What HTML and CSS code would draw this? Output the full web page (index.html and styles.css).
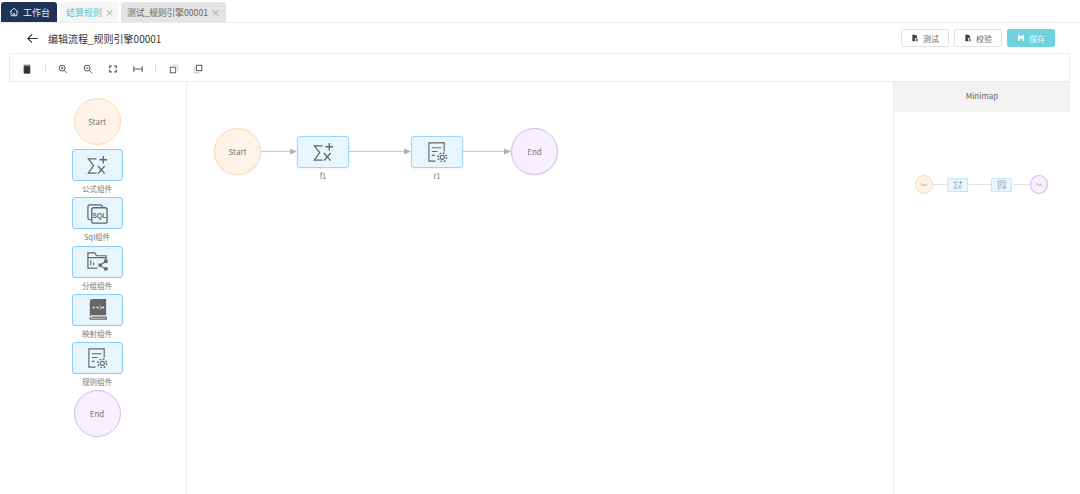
FILE: index.html
```html
<!DOCTYPE html>
<html lang="zh-CN">
<head>
    <meta charset="UTF-8">
    <title>编辑流程_规则引擎00001</title>
    <link rel="stylesheet" href="styles.css">
</head>
<body>
    <svg class="defs" width="0" height="0">
        <symbol id="i-formula" viewBox="0 0 24 24">
            <path d="M11 5H2.500L8 12 2.500 20H11" fill="none" stroke="currentColor" stroke-width="1.300"/>
            <path d="M12.500 12.500l7 8M19.500 12.500l-7 8M18 2v8M14 6h8" fill="none" stroke="currentColor" stroke-width="1.400"/>
        </symbol>
        <symbol id="i-group" viewBox="0 0 24 24">
            <path d="M12 19H2V3h7l2 3h10v5M2 8h19" fill="none" stroke="currentColor" stroke-width="1.300"/>
            <path d="M15 16l5-4M15 16l5 4" fill="none" stroke="currentColor" stroke-width="1.200"/>
            <path d="M13 14h3.500v3.500H13zM19 10h3.500v3.500H19zM19 18h3.500v3.500H19z" fill="currentColor"/>
            <path d="M5 11v5M8 13v3" fill="none" stroke="currentColor" stroke-width="1.200"/>
        </symbol>
        <symbol id="i-map" viewBox="0 0 24 24">
            <path d="M6 1h15v17H6a2 2 0 0 0-2 2V4a3 3 0 0 1 2-3z" fill="currentColor"/>
            <path d="M4 20a2 2 0 0 0 2 2h15v-2H6" fill="none" stroke="currentColor" stroke-width="1.300"/>
            <path d="M7 10h2M11 10h2M17 10h2" stroke="#fff" stroke-width="1.500"/>
            <path d="M14.500 8l2 2-2 2" fill="none" stroke="#fff" stroke-width="1"/>
        </symbol>
        <symbol id="i-rule" viewBox="0 0 24 24">
            <path d="M10 21H3V2h16v9" fill="none" stroke="currentColor" stroke-width="1.200"/>
            <path d="M6 7h10M6 11h6M6 15h3" fill="none" stroke="currentColor" stroke-width="1.200"/>
            <circle cx="17" cy="17" r="2.200" fill="none" stroke="currentColor" stroke-width="1.100"/>
            <circle cx="17" cy="17" r="4.500" fill="none" stroke="currentColor" stroke-width="1.500" stroke-dasharray="1.800 1.730"/>
        </symbol>
        <symbol id="i-doc" viewBox="0 0 12 12">
            <path d="M2 1h5l2 2v3H6v5H2z" fill="#444"/>
            <path d="M7 7h3v4H7z" fill="#666"/>
        </symbol>
    </svg>

    <nav class="tabs">
        <div class="tab tab-home">
            <svg class="home-icon" viewBox="0 0 12 12"><path d="M1 6l5-4.500L11 6M2.500 5v5.500h7V5M5 10.500V8h2v2.500" fill="none" stroke="currentColor" stroke-width="1.100"/></svg>
            <span>工作台</span>
        </div>
        <div class="tab tab-light">结算规则<span class="tab-close">×</span></div>
        <div class="tab tab-grey">测试_规则引擎00001<span class="tab-close">×</span></div>
    </nav>

    <header class="page-head">
        <svg class="back" viewBox="0 0 14 12"><path d="M13 6H2M6.500 1.500L2 6l4.500 4.500" fill="none" stroke="currentColor" stroke-width="1.300"/></svg>
        <h1 class="page-title">编辑流程_规则引擎00001</h1>
        <div class="actions">
            <button class="btn"><svg class="btn-icon"><use href="#i-doc"/></svg>测试</button>
            <button class="btn"><svg class="btn-icon"><use href="#i-doc"/></svg>校验</button>
            <button class="btn btn-save">
                <svg class="btn-icon" viewBox="0 0 12 12"><path d="M1.500 1.500h7l2 2v7h-9z" fill="#fff"/><path d="M3.500 7h5v3.500h-5zM3.500 1.500h4v2h-4z" fill="#6fd3de"/></svg>保存
            </button>
        </div>
    </header>

    <div class="editor">
        <div class="toolbar">
            <svg class="tool" viewBox="0 0 12 12"><path d="M2.500 3h7v8h-7zM2 1.500h8" fill="#333" stroke="#333"/></svg>
            <span class="tool-sep"></span>
            <svg class="tool" viewBox="0 0 12 12"><circle cx="5" cy="5" r="3.500" fill="none" stroke="#555" stroke-width="1.200"/><path d="M7.500 7.500L11 11M3.500 5h3M5 3.500v3" stroke="#555" stroke-width="1.100" fill="none"/></svg>
            <svg class="tool" viewBox="0 0 12 12"><circle cx="5" cy="5" r="3.500" fill="none" stroke="#555" stroke-width="1.200"/><path d="M7.500 7.500L11 11M3.500 5h3" stroke="#555" stroke-width="1.100" fill="none"/></svg>
            <svg class="tool tool-wide" viewBox="0 0 12 12"><path d="M2 5V2.500h2.500M7.500 2.500H10V5M10 7v2.500H7.500M4.500 9.500H2V7" fill="none" stroke="#555" stroke-width="1.400"/></svg>
            <svg class="tool" viewBox="0 0 12 12"><path d="M1 2.500v7M11 2.500v7M1 6h10" fill="none" stroke="#555" stroke-width="1.200"/></svg>
            <span class="tool-sep"></span>
            <svg class="tool" viewBox="0 0 12 12"><path d="M4 1.500h6.500V8" fill="none" stroke="#999" stroke-width="1" stroke-dasharray="1.500 1"/><rect x="1.500" y="4" width="6.500" height="6.500" fill="#fff" stroke="#666" stroke-width="1.200"/></svg>
            <svg class="tool" viewBox="0 0 12 12"><path d="M1.500 4v6.500H8" fill="none" stroke="#999" stroke-width="1" stroke-dasharray="1.500 1"/><rect x="4" y="1.500" width="6.500" height="6.500" fill="#fff" stroke="#555" stroke-width="1.200"/></svg>
        </div>

        <div class="editor-body">
            <aside class="palette">
                <div class="circle circle-start palette-circle">Start</div>
                <div class="palette-item">
                    <div class="node"><svg class="node-icon"><use href="#i-formula"/></svg></div>
                    <span class="node-label">公式组件</span>
                </div>
                <div class="palette-item">
                    <div class="node">
                        <svg class="node-icon" viewBox="0 0 24 24">
                            <path d="M5 18.500H4a2 2 0 0 1-2-2V5a2 2 0 0 1 2-2h11a2 2 0 0 1 2 2v1" fill="none" stroke="currentColor" stroke-width="1.300"/>
                            <rect x="6" y="6" width="16" height="16" rx="2" fill="#e6f5fe" stroke="currentColor" stroke-width="1.400"/>
                            <text x="14" y="16.500" class="sql-text" text-anchor="middle">SQL</text>
                        </svg>
                    </div>
                    <span class="node-label">Sql组件</span>
                </div>
                <div class="palette-item">
                    <div class="node"><svg class="node-icon"><use href="#i-group"/></svg></div>
                    <span class="node-label">分组组件</span>
                </div>
                <div class="palette-item">
                    <div class="node"><svg class="node-icon"><use href="#i-map"/></svg></div>
                    <span class="node-label">映射组件</span>
                </div>
                <div class="palette-item">
                    <div class="node"><svg class="node-icon"><use href="#i-rule"/></svg></div>
                    <span class="node-label">规则组件</span>
                </div>
                <div class="circle circle-end palette-circle">End</div>
            </aside>

            <main class="canvas">
                <svg class="edges" width="706" height="200">
                    <path d="M74 69.500H103M162 69.500H217M276 69.500H317" fill="none" stroke="#c3cbd6"/>
                    <path d="M103 66.500l7 3-7 3zM217 66.500l7 3-7 3zM317 66.500l7 3-7 3z" fill="#a9b3bf"/>
                </svg>
                <div class="circle circle-start flow-node" style="left: 27px; top: 46px">Start</div>
                <div class="node flow-node" style="left: 110px; top: 54px"><svg class="node-icon"><use href="#i-formula"/></svg></div>
                <span class="node-label flow-label" style="left: 110px; top: 88px">f1</span>
                <div class="node flow-node" style="left: 224px; top: 54px"><svg class="node-icon"><use href="#i-rule"/></svg></div>
                <span class="node-label flow-label" style="left: 224px; top: 88px">r1</span>
                <div class="circle circle-end flow-node" style="left: 324px; top: 46px">End</div>
            </main>

            <aside class="minimap">
                <div class="minimap-head">Minimap</div>
                <div class="minimap-view">
                    <svg class="mini-edges" width="176" height="40">
                        <path d="M39 19.500H53M75 19.500H97M119 19.500H136" fill="none" stroke="#dfe3e8"/>
                    </svg>
                    <div class="mini-circle circle-start" style="left: 21px">Start</div>
                    <div class="mini-node" style="left: 53px"><svg class="mini-icon"><use href="#i-formula"/></svg></div>
                    <div class="mini-node" style="left: 97px"><svg class="mini-icon"><use href="#i-rule"/></svg></div>
                    <div class="mini-circle circle-end" style="left: 136px">End</div>
                </div>
            </aside>
        </div>
    </div>
</body>
</html>
```

FILE: styles.css
```css
body {
    margin: 0;
    height: 494px;
    overflow: hidden;
    background: #fff;
    color: #555;
    font-family: "Noto Sans CJK SC", "Noto Sans", sans-serif;
}

.defs {
    position: absolute;
}

.sql-text {
    font-family: "Liberation Sans", sans-serif;
    font-size: 7px;
    font-weight: 700;
    fill: currentColor;
}

/* tabs */
.tabs {
    display: flex;
    gap: 3px;
    height: 20px;
    padding: 2px 0 0 1px;
    border-bottom: 1px solid #ececec;
}

.tab {
    display: flex;
    align-items: center;
    height: 20px;
    padding: 0 6px;
    border-radius: 3px 3px 0 0;
    font-size: 9px;
    white-space: nowrap;
}

.tab-home {
    width: 44px;
    background: #1d3359;
    color: #e6eaf0;
    gap: 4px;
}

.home-icon {
    flex: none;
    width: 10px;
    height: 10px;
    margin-left: 2px;
}

.tab-light {
    width: 46px;
    background: #f5f5f5;
    color: #55c4d4;
}

.tab-grey {
    width: 93px;
    background: #e4e4e4;
    color: #666;
    font-size: 8.700px;
}

.tab-close {
    margin-left: 3px;
    color: #999;
    font-size: 9px;
}

/* page header */
.page-head {
    display: flex;
    align-items: center;
    height: 30px;
    padding: 0 25px 0 26px;
}

.back {
    width: 13px;
    height: 11px;
    margin-right: 9px;
    color: #333;
}

.page-title {
    margin: 0;
    font-size: 10px;
    font-weight: 400;
    color: #333;
}

.actions {
    display: flex;
    gap: 5px;
    margin-left: auto;
}

.btn {
    display: flex;
    align-items: center;
    justify-content: center;
    gap: 4px;
    width: 48px;
    height: 18px;
    padding: 0;
    border: 1px solid #e2e2e2;
    border-radius: 2px;
    background: #fff;
    color: #666;
    font-family: inherit;
    font-size: 8px;
}

.btn-save {
    border-color: #6fd3de;
    background: #6fd3de;
    color: #e8f9fb;
}

.btn-icon {
    width: 8px;
    height: 8px;
}

/* editor */
.editor {
    margin: 0 10px 0 9px;
}

.toolbar {
    display: flex;
    align-items: center;
    gap: 14.500px;
    height: 25px;
    padding: 2px 0 0 12px;
    border: 1px solid #ececec;
}

.tool {
    width: 10px;
    height: 10px;
}

.tool-wide {
    margin-left: 1px;
}

.tool-sep {
    width: 1px;
    height: 9px;
    margin: 0 -2px;
    background: #e3e3e3;
}

.editor-body {
    display: flex;
    height: 412px;
}

.palette {
    display: flex;
    flex-direction: column;
    align-items: center;
    flex: none;
    width: 178px;
    padding: 16px 1px 0 0;
    box-sizing: border-box;
    border-right: 1px solid #ececec;
}

.palette-circle {
    margin-bottom: 4px;
}

.palette-item {
    display: flex;
    flex-direction: column;
    align-items: center;
    height: 48.250px;
}

.palette-item .node-label {
    margin-top: 2px;
}

.circle {
    display: flex;
    align-items: center;
    justify-content: center;
    width: 47px;
    height: 47px;
    border-radius: 50%;
    box-sizing: border-box;
    font-size: 8px;
    color: #777;
}

.circle-start {
    border: 1px solid #fbd9ae;
    background: #fff3e8;
}

.circle-end {
    border: 1px solid #d5b8f2;
    background: #f6effd;
}

.node {
    display: flex;
    align-items: center;
    justify-content: center;
    width: 52px;
    height: 32px;
    border: 1px solid #9ed4fb;
    border-radius: 3px;
    box-sizing: border-box;
    background: #e6f5fe;
    color: #666;
}

.palette .node {
    flex: none;
    width: 51px;
    border-color: #8ccbfd;
    border-width: 1.500px;
}

.node-icon {
    width: 23px;
    height: 23px;
}

.node-label {
    font-size: 7.500px;
    line-height: 11px;
    color: #777;
    white-space: nowrap;
}

/* flow canvas */
.canvas {
    position: relative;
    flex: none;
    width: 706px;
}

.edges {
    position: absolute;
    left: 0;
    top: 0;
}

.flow-node {
    position: absolute;
    box-shadow: 0 1px 3px rgba(0, 0, 0, 0.06);
}

.flow-label {
    position: absolute;
    width: 52px;
    text-align: center;
}

/* minimap */
.minimap {
    flex: 1;
    border-left: 1px solid #ececec;
}

.minimap-head {
    height: 30px;
    background: #f2f2f2;
    text-align: center;
    font-size: 8px;
    line-height: 28px;
    color: #666;
}

.minimap-view {
    position: relative;
    margin-top: 63px;
    height: 20px;
}

.mini-edges {
    position: absolute;
    left: 0;
    top: -10px;
}

.mini-circle {
    position: absolute;
    top: 0;
    display: flex;
    align-items: center;
    justify-content: center;
    width: 18px;
    height: 19px;
    border-radius: 50%;
    box-sizing: border-box;
    font-size: 3px;
    color: #999;
}

.mini-node {
    position: absolute;
    top: 3px;
    display: flex;
    align-items: center;
    justify-content: center;
    width: 21px;
    height: 14px;
    border: 1px solid #c6e6fb;
    box-sizing: border-box;
    background: #e6f5fe;
    color: #777;
}

.mini-icon {
    width: 10px;
    height: 10px;
}
```
